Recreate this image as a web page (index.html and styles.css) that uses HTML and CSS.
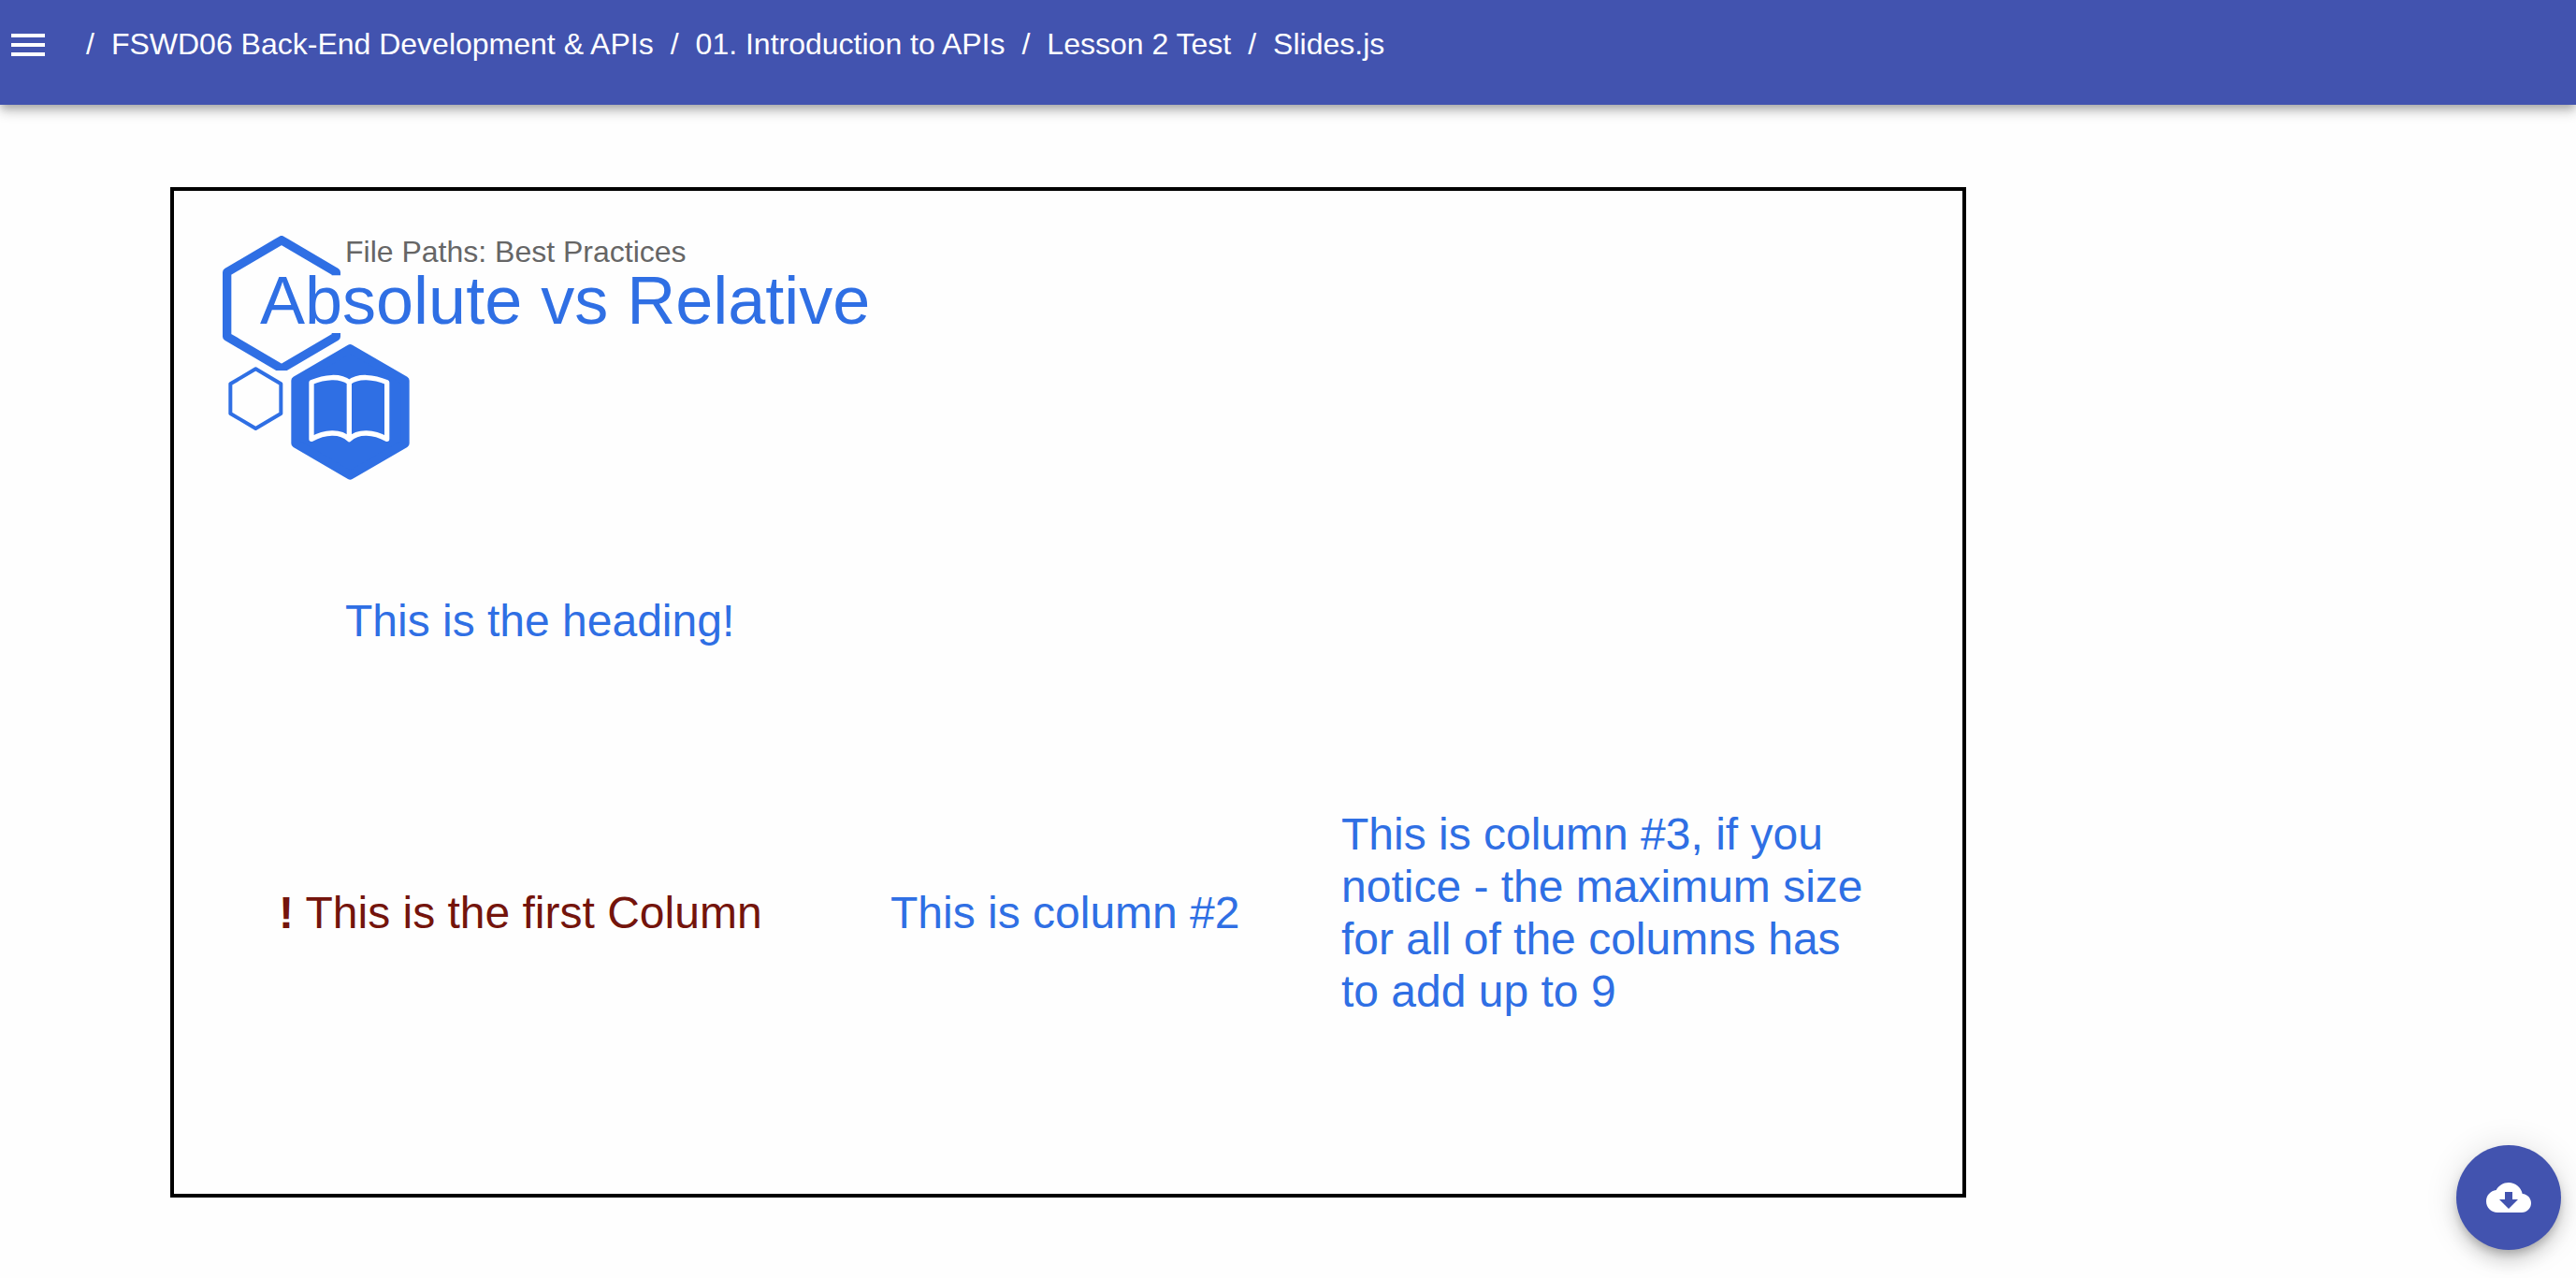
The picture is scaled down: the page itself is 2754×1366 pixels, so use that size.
FILE: index.html
```html
<!DOCTYPE html>
<html lang="en">
<head>
<meta charset="utf-8">
<meta name="viewport" content="width=device-width, initial-scale=1">
<title>Slides.js</title>
<link rel="stylesheet" href="styles.css">
</head>
<body>
<header class="app-bar">
  <button class="menu-button" type="button" aria-label="Open menu">
    <svg class="icon" viewBox="0 0 24 24" aria-hidden="true"><path d="M3 18h18v-2H3v2zm0-5h18v-2H3v2zm0-7v2h18V6H3z"/></svg>
  </button>
  <nav aria-label="Breadcrumb">
    <ol class="breadcrumbs">
      <li class="crumb"><a href="#course">FSWD06 Back-End Development &amp; APIs</a></li>
      <li class="crumb"><a href="#module">01. Introduction to APIs</a></li>
      <li class="crumb"><a href="#lesson">Lesson 2 Test</a></li>
      <li class="crumb"><a href="#slides">Slides.js</a></li>
    </ol>
  </nav>
</header>

<main class="content">
  <article class="slide">
    <svg class="slide-logo" viewBox="203 185 600 783" aria-hidden="true">
      <defs>
        <clipPath id="hex-gap">
          <rect x="200" y="180" width="385" height="132"/>
          <rect x="200" y="312" width="250" height="185"/>
          <rect x="200" y="497" width="385" height="121"/>
        </clipPath>
      </defs>
      <path class="hex-large" clip-path="url(#hex-gap)" d="M392 199 567 302V508L392 611 217 508V302Z"/>
      <path class="hex-small" d="M309 612 390 660V755L309 803 228 755V660Z"/>
      <path class="hex-solid" d="M612 547 788 649V851L612 953 437 851V649Z"/>
      <path class="book" d="M609 655C580 632 530 637 488 655V837C530 814 580 809 609 838ZM609 655C638 632 688 637 730 655V837C688 814 638 809 609 838Z"/>
    </svg>
    <header class="slide-header">
      <p class="slide-topic">File Paths: Best Practices</p>
      <h1 class="slide-title">Absolute vs Relative</h1>
    </header>
    <h2 class="slide-heading">This is the heading!</h2>
    <div class="columns">
      <p class="column column-alert"><strong>!</strong> This is the first Column</p>
      <p class="column">This is column #2</p>
      <p class="column">This is column #3, if you notice - the maximum size for all of the columns has to add up to 9</p>
    </div>
  </article>
</main>

<button class="fab" type="button" aria-label="Download">
  <svg class="icon" viewBox="0 0 24 24" aria-hidden="true"><path d="M19.35 10.04C18.67 6.59 15.64 4 12 4 9.11 4 6.6 5.64 5.35 8.04 2.34 8.36 0 10.91 0 14c0 3.31 2.69 6 6 6h13c2.76 0 5-2.24 5-5 0-2.64-2.05-4.78-4.65-4.96zM17 13l-5 5-5-5h3V9h4v4h3z"/></svg>
</button>
</body>
</html>
```

FILE: styles.css
```css
:root {
  --primary: #4253af;
  --blue: #2f6fe4;
  --red: #74140c;
  --gray: #666;
}

* {
  box-sizing: border-box;
}

body {
  margin: 0;
  background: #fefefe;
  font-family: "Liberation Sans", Arial, Helvetica, sans-serif;
}

p, h1, h2, ol {
  margin: 0;
  padding: 0;
  font-weight: 400;
}

button {
  padding: 0;
  border: 0;
  color: #fff;
  cursor: pointer;
}

.icon {
  display: block;
  width: 48px;
  height: 48px;
  fill: currentColor;
}

.app-bar {
  display: flex;
  align-items: flex-start;
  gap: 20px;
  min-height: 112px;
  padding: 24px 6px;
  background: var(--primary);
  color: #fff;
  box-shadow: 0 4px 8px -2px rgba(0, 0, 0, .2), 0 8px 10px rgba(0, 0, 0, .14), 0 2px 20px rgba(0, 0, 0, .12);
}

.menu-button {
  background: none;
}

.breadcrumbs {
  display: flex;
  flex-wrap: wrap;
  list-style: none;
  font-size: 32px;
  line-height: 46px;
}

.crumb::before {
  content: "/";
  margin: 0 18px;
}

.crumb a {
  color: inherit;
  text-decoration: none;
}

.content {
  padding: 88px 182px 86px;
}

.slide {
  position: relative;
  max-width: 1920px;
  min-height: 1080px;
  padding: 51px 92px 72px;
  border: 4px solid #000;
  color: var(--blue);
}

.slide-logo {
  position: absolute;
  top: 48px;
  left: 52px;
  width: 200px;
  height: 261px;
}

.hex-large, .hex-small, .book {
  fill: none;
  stroke: var(--blue);
  stroke-linejoin: round;
}

.hex-large {
  stroke-width: 28px;
}

.hex-small {
  stroke-width: 12px;
}

.hex-solid {
  fill: var(--blue);
  stroke: var(--blue);
  stroke-width: 28px;
  stroke-linejoin: round;
}

.book {
  stroke: #fff;
  stroke-width: 16px;
}

.slide-header {
  position: relative;
}

.slide-topic {
  padding-left: 91px;
  color: var(--gray);
  font-size: 32px;
  line-height: 28px;
}

.slide-title {
  font-size: 72px;
  line-height: 76px;
}

.slide-heading {
  margin-top: 277px;
  padding-left: 91px;
  font-size: 48px;
  line-height: 56px;
}

.columns {
  display: grid;
  grid-template-columns: 654fr 482fr 572fr;
  align-items: center;
  margin-top: 172px;
  padding-left: 20px;
  font-size: 48px;
  line-height: 56px;
}

.column-alert {
  color: var(--red);
}

.fab {
  position: fixed;
  right: 16px;
  bottom: 30px;
  display: grid;
  place-items: center;
  width: 112px;
  height: 112px;
  border-radius: 50%;
  background: var(--primary);
  box-shadow: 0 6px 10px -2px rgba(0, 0, 0, .2), 0 12px 20px rgba(0, 0, 0, .14), 0 2px 36px rgba(0, 0, 0, .12);
}
```
